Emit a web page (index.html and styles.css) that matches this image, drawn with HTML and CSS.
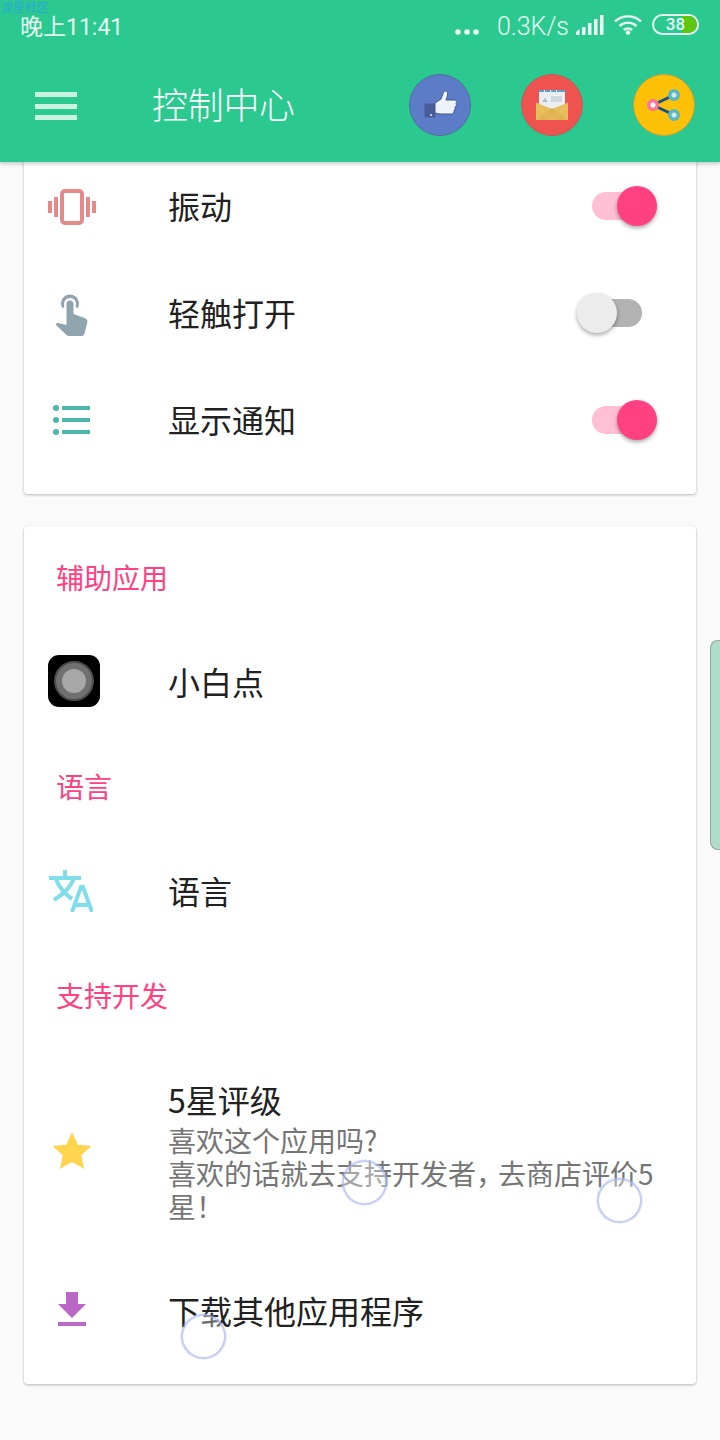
FILE: index.html
```html
<!DOCTYPE html>
<html>

<head lang="zh">
  <meta charset="UTF-8">
  <title>控制中心</title>
  <link rel="stylesheet" href="styles.css">
</head>

<body>
  <div class="watermark">流星社区</div>

  <header class="top">
    <div class="status">
      <span class="time">晚上11:41</span>
      <div class="status-right">
        <svg class="dots" width="24" height="6" viewBox="0 0 24 6"><circle cx="3" cy="3" r="2.8"/><circle cx="12" cy="3" r="2.8"/><circle cx="21" cy="3" r="2.8"/></svg>
        <span class="speed">0.3K/s</span>
        <svg class="signal" width="28" height="20" viewBox="0 0 28 20"><path d="M0 17l3.500-3v6H0zM6 12h3.500v8H6zM12 8h3.500v12H12zM18 4h3.500v16H18zM24 0h3.500v20H24z"/></svg>
        <svg class="wifi" width="28" height="21" viewBox="0 0 28 21"><path d="M1 7.500a19 19 0 0 1 26 0M5.500 12a12.500 12.500 0 0 1 17 0M9.800 16a6.500 6.500 0 0 1 8.400 0" fill="none" stroke="#e8f8f2" stroke-width="2.400"/><circle cx="14" cy="18.500" r="2.300" fill="#e8f8f2"/></svg>
        <div class="battery"><span class="battery-fill"></span><span class="battery-num">38</span></div>
      </div>
    </div>
    <div class="bar">
      <div class="menu"><span></span><span></span><span></span></div>
      <h1 class="title">控制中心</h1>
      <div class="actions">
        <svg class="action" viewBox="0 0 62 62">
          <circle cx="31" cy="31" r="30.500" fill="#5c7cc8" stroke="#50709a" stroke-width="1"/>
          <rect x="15.500" y="29.500" width="11" height="14" rx="1" fill="#4a5c98"/>
          <circle cx="22" cy="41" r=".9" fill="#fff"/>
          <path d="M26 29l6-4 2.500-7c.5-1.500 3.500-1.500 4 .5.5 2-.5 5-1.500 7.500h9c2 0 2.500 2.500 1 3.500.8 1.500.3 3-1 3.500.6 1.500 0 3-1 3.500.3 2-.8 3.500-2.500 3.500H31c-2 0-3-1-5-1z" fill="#eef3f8" stroke="#41578f" stroke-width="1"/>
        </svg>
        <svg class="action" viewBox="0 0 62 62">
          <circle cx="31" cy="31" r="30.500" fill="#ef5350" stroke="#b8605a" stroke-width="1"/>
          <rect x="18" y="16" width="26" height="24" fill="#eceff1"/>
          <path d="M18 16h5v2h-5zM24 16h5v2h-5zM30 16h5v2h-5zM36 16h8v2h-8z" fill="#5aa0d0"/>
          <rect x="30" y="22" width="11" height="6" fill="#cfd8dc"/>
          <path d="M21 28l3-4 3 4z" fill="#b0bec5"/>
          <path d="M15 28.500L31 35l16-6.500V46H15z" fill="#e8bd5c"/>
          <path d="M15 46l16-12 16 12z" fill="#e2b554"/>
        </svg>
        <svg class="action" viewBox="0 0 62 62">
          <circle cx="31" cy="31" r="30.500" fill="#ffc107" stroke="#c4a040" stroke-width="1"/>
          <path d="M20 31l21-10M20 31l21 10" stroke="#15508c" stroke-width="3"/>
          <circle cx="41" cy="21" r="6" fill="#5cb8c0"/><circle cx="41" cy="21" r="2.500" fill="#cfe8ec"/>
          <circle cx="41" cy="41" r="6" fill="#5cb8c0"/><circle cx="41" cy="41" r="2.500" fill="#cfe8ec"/>
          <circle cx="20" cy="31" r="6" fill="#f9779b"/><circle cx="20" cy="31" r="2.500" fill="#fff"/>
        </svg>
      </div>
    </div>
  </header>

  <main class="scroll">
    <section class="card card-first">
      <div class="row">
        <div class="row-icon">
          <svg width="48" height="36" viewBox="0 0 48 36" fill="#e58a8a"><rect x="14" y="2" width="20" height="32" rx="3" fill="none" stroke="#e58a8a" stroke-width="4"/><rect x="6" y="8" width="4" height="20"/><rect x="38" y="8" width="4" height="20"/><rect y="12" width="4" height="12"/><rect x="44" y="12" width="4" height="12"/></svg>
        </div>
        <span class="row-text">振动</span>
        <div class="switch on"><span class="track"></span><span class="thumb"></span></div>
      </div>
      <div class="row">
        <div class="row-icon">
          <svg class="icon-touch" width="32" height="42" viewBox="0 0 32 42" fill="#90a4ae"><path d="M6.600 14.500a9 9 0 1 1 14.800 0L19.500 12.500a6 6 0 1 0-11 0z"/><path d="M10.500 10a3.500 3.500 0 0 1 7 0V20l11 4c2 .8 3 2 3 3.500L29 38c-.3 2-2 4-3.500 4H13c-1 0-2-.5-2.800-1.300L0 31c-1-1.200 1-2 2-2l8.500 2z"/></svg>
        </div>
        <span class="row-text">轻触打开</span>
        <div class="switch"><span class="track"></span><span class="thumb"></span></div>
      </div>
      <div class="row">
        <div class="row-icon">
          <svg class="icon-list" width="38" height="30" viewBox="0 0 38 30" fill="#4db6ac"><circle cx="3" cy="3" r="3"/><circle cx="3" cy="15" r="3"/><circle cx="3" cy="27" r="3"/><rect x="9" y="1" width="28" height="4"/><rect x="9" y="13" width="28" height="4"/><rect x="9" y="25" width="28" height="4"/></svg>
        </div>
        <span class="row-text">显示通知</span>
        <div class="switch on"><span class="track"></span><span class="thumb"></span></div>
      </div>
    </section>

    <section class="card card-second">
      <h2 class="group">辅助应用</h2>
      <div class="row">
        <div class="row-icon">
          <div class="dot-app"><span class="dot-outer"><span class="dot-inner"></span></span></div>
        </div>
        <span class="row-text">小白点</span>
      </div>
      <h2 class="group">语言</h2>
      <div class="row">
        <div class="row-icon">
          <svg class="icon-lang" width="46" height="42" viewBox="0 0 46 42" fill="none" stroke="#80deea" stroke-width="4"><path d="M2 8h32M18 0v8M27 8C24 17 15 25 7 30M9 9c3 8 9 15 16 20"/><path d="M25 42l9-25h2l9 25M28 35h14"/></svg>
        </div>
        <span class="row-text">语言</span>
      </div>
      <h2 class="group">支持开发</h2>
      <div class="row row-tall">
        <div class="row-icon">
          <svg class="icon-star" width="40" height="37" viewBox="0 0 40 38" fill="#ffd54f"><path d="M20 0l5.900 13 14.100 1.500-10.500 9.500 3 14L20 30.800 7.500 38l3-14L0 14.500 14.100 13z"/></svg>
        </div>
        <div class="row-body">
          <div class="row-text">5星评级</div>
          <p class="row-sub">喜欢这个应用吗?<br>喜欢的话就去支持开发者<span class="comma">，</span>去商店评价5星！</p>
        </div>
      </div>
      <div class="row">
        <div class="row-icon">
          <svg class="icon-down" width="28" height="34" viewBox="0 0 28 34" fill="#ba68c8"><path d="M8 0h12v12h8L14 26 0 12h8z"/><rect y="30" width="28" height="4"/></svg>
        </div>
        <span class="row-text">下载其他应用程序</span>
      </div>
    </section>
  </main>

  <span class="side-handle"></span>
  <span class="ring ring-a"></span>
  <span class="ring ring-b"></span>
  <span class="ring ring-c"></span>
</body>

</html>
```

FILE: styles.css
```css
* {
  margin: 0;
  padding: 0;
  box-sizing: border-box;
}

html,
body {
  height: 1440px;
  overflow: hidden;
}

body {
  position: relative;
  display: flex;
  flex-direction: column;
  background: #fafafa;
  font-family: "Noto Sans CJK SC", "Noto Sans", sans-serif;
  color: #212121;
}

.watermark {
  position: absolute;
  left: 1px;
  top: 0;
  z-index: 9;
  font-size: 12px;
  line-height: 14px;
  color: #2ba6dc;
}

/* 顶部 */
.top {
  position: relative;
  z-index: 5;
  flex: none;
  height: 162px;
  background: #2bc990;
  box-shadow: 0 2px 4px rgba(0, 0, 0, 0.2);
}

.status {
  height: 54px;
  display: flex;
  justify-content: space-between;
  align-items: center;
  padding: 0 21px 2px 20px;
  color: #e8f8f2;
}

.time {
  font-family: Roboto, "Noto Sans CJK SC", sans-serif;
  font-size: 23px;
  line-height: 26px;
  margin-top: 4px;
}

.status-right {
  display: flex;
  align-items: center;
}

.dots {
  fill: #e8f8f2;
  margin: 11px 18px 0 0;
}

.speed {
  font-family: Roboto, sans-serif;
  font-weight: 300;
  font-size: 25px;
  margin-right: 7px;
}

.signal {
  fill: #e8f8f2;
  margin: 0 10px 3px 0;
}

.wifi {
  margin: 0 11px 3px 0;
}

.battery {
  position: relative;
  width: 47px;
  height: 21px;
  border: 2px solid #e8f8f2;
  border-radius: 11px;
  overflow: hidden;
  margin: 0 0 4px -1px;
}

.battery-fill {
  position: absolute;
  right: 0;
  top: 0;
  bottom: 0;
  width: 15px;
  background: #5cc610;
}

.battery-num {
  position: absolute;
  inset: 0;
  text-align: center;
  font-family: Roboto, sans-serif;
  font-size: 17px;
  font-weight: 500;
  line-height: 17px;
}

.bar {
  height: 108px;
  display: flex;
  align-items: center;
  padding: 0 25px 6px 35px;
}

.menu {
  width: 42px;
  display: flex;
  flex-direction: column;
  gap: 6.500px;
  margin-top: 2px;
}

.menu span {
  height: 5px;
  background: rgba(255, 255, 255, 0.75);
}

.title {
  margin: 0 0 4px 75px;
  font-size: 36px;
  font-weight: 300;
  letter-spacing: -0.3px;
  color: #fff;
}

.actions {
  margin-left: auto;
  display: flex;
  gap: 50px;
}

.action {
  width: 62px;
  height: 62px;
  display: block;
}

/* 列表 */
.scroll {
  flex: 1;
  padding: 0 24px;
}

.card {
  background: #fff;
  border-radius: 4px;
  box-shadow: 0 1px 3px rgba(0, 0, 0, 0.28);
}

.card-first {
  margin-top: -9px;
  height: 341px;
}

.card-second {
  margin-top: 32px;
  height: 858px;
}

.row {
  height: 107px;
  display: flex;
  align-items: center;
}

.card-second .row {
  height: 104.500px;
}

.card-second .row-tall {
  height: 211px;
}

.row-icon {
  flex: none;
  width: 96px;
  margin-right: 49px;
  display: flex;
  justify-content: center;
}

.row-text {
  font-size: 32px;
  line-height: 40px;
  margin: -4px 0 0 -1px;
}

.row-body {
  flex: 1;
  padding-right: 38px;
  margin: 0 0 7px -1px;
}

.row-body .row-text {
  margin: 0 0 5px;
}

.row-sub {
  font-size: 28px;
  line-height: 33px;
  color: #757575;
}

.comma {
  letter-spacing: -6px;
}

.group {
  height: 104.500px;
  padding-left: 32px;
  font-size: 28px;
  font-weight: 400;
  line-height: 102px;
  color: #ff4081;
}

/* 图标微调 */
.icon-touch {
  margin-top: 2px;
}

.icon-list {
  margin-top: -2px;
}

.icon-lang {
  margin: -2px 0 0 -4px;
}

.icon-star {
  margin-top: -8px;
}

.icon-down {
  margin-top: -6px;
}

/* 开关 */
.switch {
  position: relative;
  width: 50px;
  height: 28px;
  margin-left: auto;
  margin-right: 54px;
  margin-top: -2px;
}

.track {
  display: block;
  height: 28px;
  border-radius: 14px;
  background: #b2b2b2;
}

.thumb {
  position: absolute;
  left: -15px;
  top: -6px;
  width: 40px;
  height: 40px;
  border-radius: 50%;
  background: #ececec;
  box-shadow: 0 2px 4px rgba(0, 0, 0, 0.35);
}

.switch.on .track {
  background: #ffc0d6;
}

.switch.on .thumb {
  left: 25px;
  background: #ff4081;
}

/* 小白点图标 */
.dot-app {
  width: 52px;
  height: 52px;
  margin: -4px 0 0 4px;
  border-radius: 11px;
  background: #000;
  display: flex;
  align-items: center;
  justify-content: center;
}

.dot-outer {
  width: 40px;
  height: 40px;
  border-radius: 50%;
  background: #707070;
  border: 2px solid #4c4c4c;
  display: flex;
  align-items: center;
  justify-content: center;
}

.dot-inner {
  width: 24px;
  height: 24px;
  border-radius: 50%;
  background: #a8a8a8;
}

/* 浮层 */
.side-handle {
  position: absolute;
  right: 0;
  top: 640px;
  width: 10px;
  height: 210px;
  background: #b0dccb;
  border: 1px solid #8fa8a0;
  border-right: 0;
  border-radius: 8px 0 0 8px;
}

.ring {
  position: absolute;
  width: 45px;
  height: 45px;
  border-radius: 50%;
  border: 2px solid rgba(165, 178, 235, 0.65);
  background: rgba(255, 255, 255, 0.35);
  box-shadow: 0 0 2px rgba(165, 178, 235, 0.8);
}

.ring-a {
  left: 342px;
  top: 1160px;
}

.ring-b {
  left: 597px;
  top: 1178px;
}

.ring-c {
  left: 181px;
  top: 1314px;
}
```
